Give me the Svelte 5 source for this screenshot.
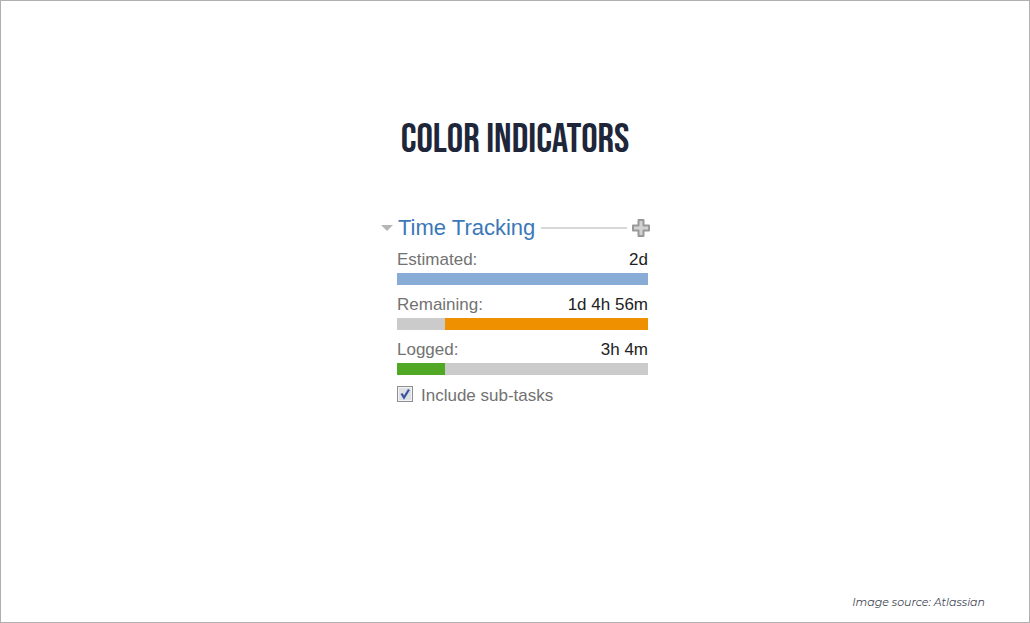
<script>
  const rows = [
    { label: 'Estimated:', value: '2d', kind: 'estimated', start: 0, share: 100 },
    { label: 'Remaining:', value: '1d 4h 56m', kind: 'remaining', start: 19.2, share: 80.8 },
    { label: 'Logged:', value: '3h 4m', kind: 'logged', start: 0, share: 19.2 }
  ];
  let open = $state(true);
  let includeSubtasks = $state(true);
</script>

<main class="page">
  <h1>COLOR INDICATORS</h1>

  <section class="panel">
    <header>
      <button class="toggle" aria-label="Toggle time tracking" aria-expanded={open} onclick={() => (open = !open)}>
        <svg width="12" height="6" viewBox="0 0 12 6"><path d="M0 0H12L6 6Z" fill="#b5b5b5" /></svg>
      </button>
      <h2>Time Tracking</h2>
      <span class="rule"></span>
      <button class="add" aria-label="Log work">
        <svg width="20" height="20" viewBox="0 0 20 20">
          <path d="M7.5 2H12.5V7.5H18V12.5H12.5V18H7.5V12.5H2V7.5H7.5Z" fill="#d2d2d2" stroke="#999" stroke-width="2" stroke-linejoin="round" />
        </svg>
      </button>
    </header>

    {#if open}
      <div class="body">
        {#each rows as row}
          <div class="row">
            <div class="caption"><span class="label">{row.label}</span><span>{row.value}</span></div>
            <div class="track">
              <div class="fill {row.kind}" style="margin-left: {row.start}%; width: {row.share}%"></div>
            </div>
          </div>
        {/each}
        <label class="option">
          <input type="checkbox" bind:checked={includeSubtasks} />
          <span>Include sub-tasks</span>
        </label>
      </div>
    {/if}
  </section>

  <footer>Image source: Atlassian</footer>
</main>

<style>
  :global(body) {
    margin: 0;
    background: #fff;
  }
  .page {
    box-sizing: border-box;
    min-height: 100vh;
    padding: 114px 44px 12px;
    border: 1px solid #b0b0b0;
    display: flex;
    flex-direction: column;
    align-items: center;
    font-family: "Liberation Sans", Arial, sans-serif;
    color: #222;
  }
  h1 {
    margin: 0;
    font: 400 41px/50px "Bebas Neue", "Oswald", "Roboto Condensed", "Liberation Sans Narrow", "Liberation Sans", sans-serif;
    color: #20263a;
    white-space: nowrap;
  }
  .panel {
    box-sizing: border-box;
    width: 272px;
    max-width: 100%;
    margin-top: 50px;
    padding-left: 2px;
  }
  header {
    display: flex;
    align-items: center;
    height: 26px;
  }
  button {
    display: flex;
    padding: 0;
    border: 0;
    background: none;
    cursor: pointer;
  }
  h2 {
    margin: 0 6px 0 5px;
    font-size: 22px;
    line-height: 26px;
    font-weight: 400;
    color: #3b78b8;
    white-space: nowrap;
  }
  .rule {
    flex: 1;
    height: 2px;
    margin-right: 4px;
    background: #d8d8d8;
  }
  .body {
    padding: 9px 3px 0 16px;
  }
  .row {
    margin-bottom: 10px;
  }
  .caption {
    display: flex;
    justify-content: space-between;
    font-size: 17px;
    line-height: 20px;
    padding-bottom: 3px;
  }
  .label,
  .option {
    color: #727272;
  }
  .track {
    height: 12px;
    background: #cbcbcb;
  }
  .fill {
    height: 100%;
  }
  .estimated {
    background: #89acd6;
  }
  .remaining {
    background: #ee9000;
  }
  .logged {
    background: #51a825;
  }
  .option {
    display: flex;
    align-items: flex-start;
    gap: 8px;
    font-size: 17px;
    line-height: 22px;
  }
  input {
    appearance: none;
    box-sizing: border-box;
    width: 16px;
    height: 16px;
    margin: 1px 0 0;
    border: 1px solid #8c8e94;
    box-shadow: inset 0 0 0 1px #f4f4f4;
    background: #dde1e6;
  }
  input:checked {
    background: #dde1e6 url("data:image/svg+xml,%3Csvg xmlns='http://www.w3.org/2000/svg' viewBox='0 0 14 14'%3E%3Cpath d='M3.5 6.5L6 10.5L11 2.5' fill='none' stroke='%233c559d' stroke-width='2.3'/%3E%3C/svg%3E") center / 14px 14px no-repeat;
  }
  footer {
    align-self: flex-end;
    margin-top: auto;
    font: italic 400 11px/16px "Montserrat", "DejaVu Sans", sans-serif;
    color: #444954;
  }
</style>
